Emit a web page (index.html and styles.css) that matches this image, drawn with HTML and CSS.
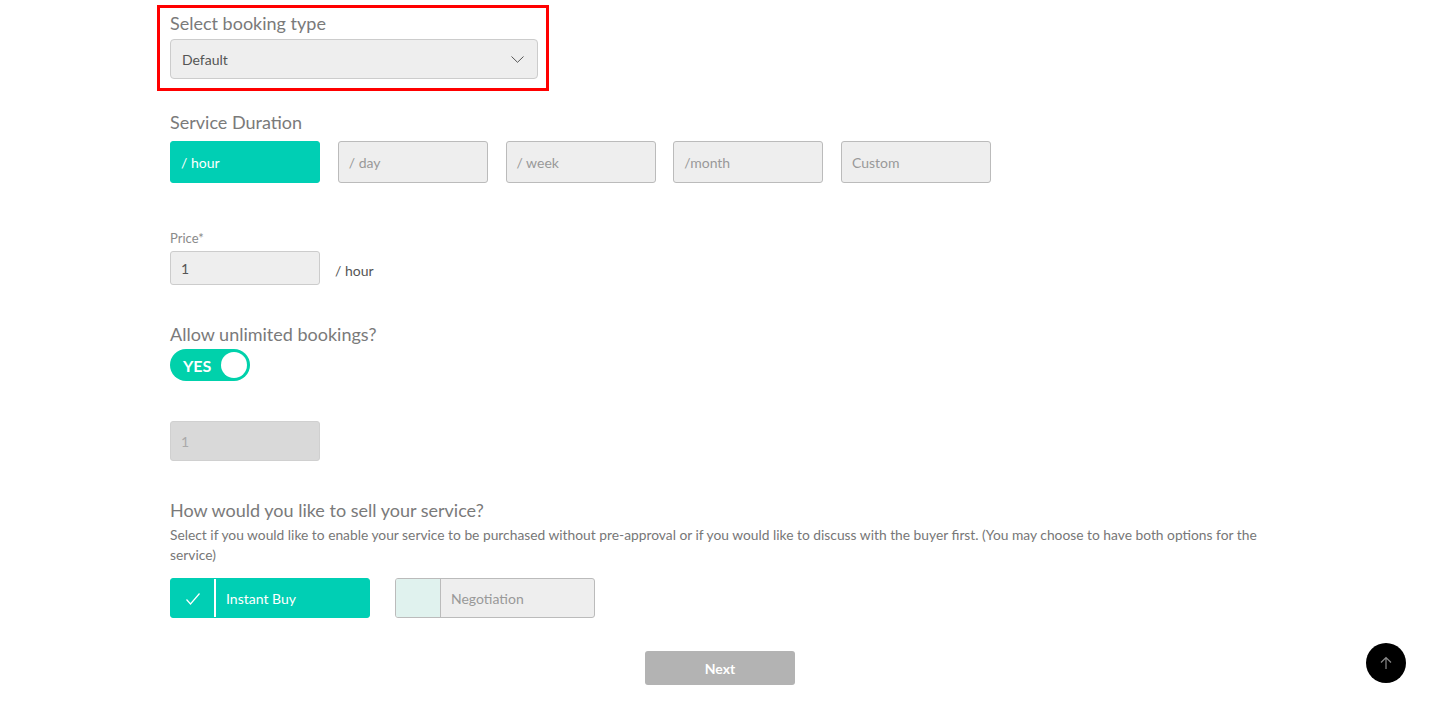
FILE: index.html
```html
<!DOCTYPE html>
<html lang="en">
    <head>
        <meta charset="utf-8">
        <title>Create service</title>
        <meta name="viewport" content="width=device-width, initial-scale=1.0">
        <link rel="stylesheet" href="styles.css">
    </head>
    <body>
        <main class="wrap">
            <section class="bookingType">
                <h3 class="overskrift">Select booking type</h3>
                <div class="select">
                    <span>Default</span>
                    <svg width="13" height="7" viewBox="0 0 13 7"><polyline points="0.5,0.5 6.5,6.3 12.5,0.5" fill="none" stroke="#555" stroke-width="1"/></svg>
                </div>
            </section>

            <h3 class="overskrift duration">Service Duration</h3>
            <div class="durations">
                <button class="dur active">/ hour</button>
                <button class="dur">/ day</button>
                <button class="dur">/ week</button>
                <button class="dur">/month</button>
                <button class="dur">Custom</button>
            </div>

            <p class="smallLabel">Price*</p>
            <div class="priceRow">
                <div class="input">1</div>
                <span class="per">/ hour</span>
            </div>

            <h3 class="overskrift unlimited">Allow unlimited bookings?</h3>
            <div class="toggle">
                <b>YES</b>
                <span class="knob"></span>
            </div>

            <div class="input disabled">1</div>

            <h3 class="overskrift sell">How would you like to sell your service?</h3>
            <p class="beskrivelse">Select if you would like to enable your service to be purchased without pre-approval or if you would like to discuss with the buyer first. (You may choose to have both options for the service)</p>

            <div class="options">
                <div class="option checked">
                    <span class="box">
                        <svg width="16" height="14" viewBox="0 0 16 14"><polyline points="1.5,7.5 5.5,12 14.5,1.5" fill="none" stroke="#fff" stroke-width="1.2"/></svg>
                    </span>
                    <span class="optText">Instant Buy</span>
                </div>
                <div class="option">
                    <span class="box"></span>
                    <span class="optText">Negotiation</span>
                </div>
            </div>

            <div class="nextRow">
                <button class="next">Next</button>
            </div>
        </main>

        <a class="toTop" href="#">
            <svg width="12" height="14" viewBox="0 0 12 14"><path d="M6 13V1.5M1 6.5L6 1.5L11 6.5" fill="none" stroke="#8a8a8a" stroke-width="1.2"/></svg>
        </a>
    </body>
</html>
```

FILE: styles.css
```css
* {
    margin: 0px;
    padding: 0px;
    box-sizing: border-box;
}

body {
    font-family: Lato, "Open Sans", sans-serif;
    background-color: white;
    color: #777;
}

.wrap {
    width: 1100px;
    margin: 0 auto;
}

.overskrift {
    font-size: 18px;
    font-weight: normal;
    line-height: 22px;
    color: #7a7a7a;
}

.bookingType {
    width: 392px;
    margin: 5px 0 0 -13px;
    border: 3px solid #f00;
    padding: 4px 8px 9px 10px;
}

.bookingType .overskrift {
    margin-bottom: 5px;
}

.select {
    height: 40px;
    background-color: #eee;
    border: 1px solid #ccc;
    border-radius: 4px;
    display: flex;
    align-items: center;
    justify-content: space-between;
    padding: 0 13px 0 11px;
    font-size: 14px;
    color: #555;
}

.duration {
    margin-top: 20px;
}

.durations {
    display: flex;
    gap: 17.75px;
    margin-top: 8px;
}

.dur {
    width: 150px;
    height: 42px;
    background-color: #eee;
    border: 1px solid #bbb;
    border-radius: 3px;
    font-family: inherit;
    font-size: 14px;
    color: #999;
    text-align: left;
    padding-left: 10px;
}

.dur.active {
    background-color: #00cfb4;
    border-color: #00cfb4;
    color: white;
}

.smallLabel {
    margin-top: 47px;
    font-size: 13px;
    line-height: 16px;
    color: #8a8a8a;
}

.priceRow {
    display: flex;
    align-items: center;
    margin-top: 5px;
}

.input {
    width: 150px;
    height: 34px;
    background-color: #eee;
    border: 1px solid #ccc;
    border-radius: 3px;
    font-size: 14px;
    color: #555;
    display: flex;
    align-items: center;
    padding-left: 10px;
}

.per {
    font-size: 14px;
    color: #555;
    margin-left: 15px;
    padding-top: 4px;
}

.unlimited {
    margin-top: 38px;
}

.toggle {
    width: 80px;
    height: 32px;
    margin-top: 4px;
    border-radius: 16px;
    background-color: #00d1ab;
    display: flex;
    align-items: center;
    justify-content: space-between;
    padding: 0 3px 0 13px;
    color: white;
    font-size: 16px;
}

.knob {
    width: 26px;
    height: 26px;
    border-radius: 50%;
    background-color: white;
}

.input.disabled {
    margin-top: 40px;
    height: 40px;
    background-color: #d9d9d9;
    border-color: #d0d0d0;
    color: #aaa;
}

.sell {
    margin-top: 38px;
}

.beskrivelse {
    margin-top: 4px;
    font-size: 13.8px;
    line-height: 20px;
    color: #777;
}

.options {
    display: flex;
    gap: 25px;
    margin-top: 13px;
}

.option {
    width: 200px;
    height: 40px;
    display: flex;
    background-color: #eee;
    border: 1px solid #bbb;
    border-radius: 3px;
    overflow: hidden;
}

.option .box {
    width: 45px;
    display: flex;
    align-items: center;
    justify-content: center;
    background-color: #e0f2ee;
    border-right: 1px solid #bbb;
}

.option .optText {
    display: flex;
    align-items: center;
    padding-left: 10px;
    font-size: 14px;
    color: #999;
}

.option.checked {
    background-color: #00cfb4;
    border-color: #00cfb4;
}

.option.checked .box {
    background-color: #00cfb4;
    border-right: 2px solid white;
    padding-top: 2px;
}

.option.checked .optText {
    color: white;
}

.nextRow {
    display: flex;
    justify-content: center;
    margin-top: 33px;
}

.next {
    width: 150px;
    height: 34px;
    background-color: #b3b3b3;
    border: none;
    border-radius: 3px;
    color: white;
    font-family: inherit;
    font-size: 14px;
    font-weight: bold;
}

.toTop {
    position: fixed;
    right: 34px;
    bottom: 18px;
    width: 40px;
    height: 40px;
    border-radius: 50%;
    background-color: black;
    display: flex;
    align-items: center;
    justify-content: center;
}
```
